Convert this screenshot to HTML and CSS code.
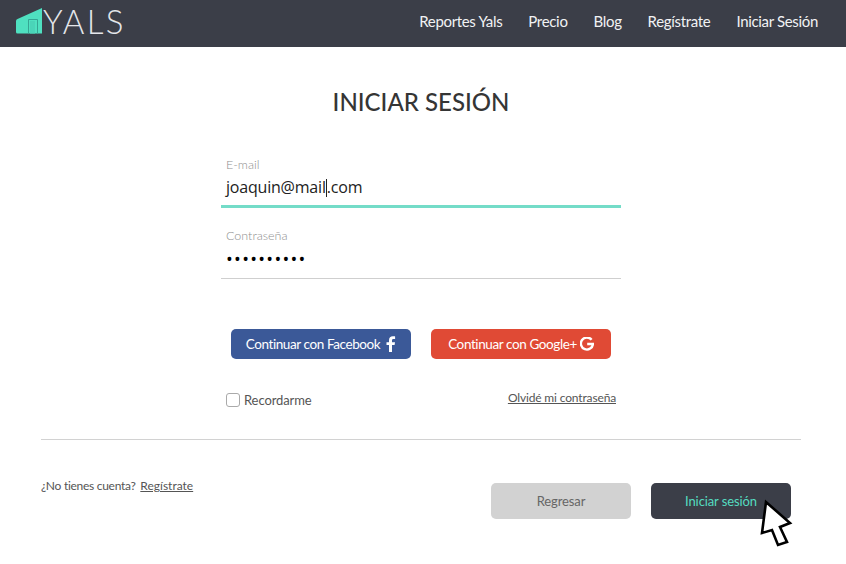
FILE: index.html
```html
<!DOCTYPE html>
<html lang="es">
<head>
  <meta charset="UTF-8" />
  <meta name="viewport" content="width=device-width, initial-scale=1" />
  <title>YALS - Iniciar sesión</title>
  <link rel="stylesheet" href="styles.css">
</head>
<body>
  <header class="topbar">
    <a class="brand" href="#">
      <svg class="brand-icon" width="26" height="26" viewBox="0 0 26 26">
        <path d="M0 13 Q0 11.5 1.5 11 L26 0 V25.5 H1.5 Q0 25.5 0 24 Z" fill="#4fe0c0"/>
        <path d="M12.5 11.5 H21.5 V25.5 M12.5 11.5 V25.5" fill="none" stroke="#35a593" stroke-width="1"/>
        <path d="M14 13 H19 V25.5 H14 Z" fill="#4ad4b8"/>
      </svg>
      <span class="brand-name">YALS</span>
    </a>
    <nav class="nav">
      <a href="#">Reportes Yals</a>
      <a href="#">Precio</a>
      <a href="#">Blog</a>
      <a href="#">Regístrate</a>
      <a href="#">Iniciar Sesión</a>
    </nav>
  </header>

  <main class="page">
    <h1 class="title">INICIAR SESIÓN</h1>

    <form class="login-form">
      <div class="field field-active">
        <label class="field-label">E-mail</label>
        <div class="field-value">joaquin@mail<span class="caret"></span>.com</div>
      </div>
      <div class="field">
        <label class="field-label">Contraseña</label>
        <div class="field-value dots">••••••••••</div>
      </div>

      <div class="social">
        <a class="btn-social fb" href="#">Continuar con Facebook
          <svg width="10" height="16" viewBox="0 0 10 16"><path d="M3 16 V9 H0.5 V6.2 H3 V4.2 C3 1.6 4.5 0.3 6.8 0.3 C7.9 0.3 8.8 0.4 9.1 0.4 V3 H7.5 C6.3 3 6 3.6 6 4.5 V6.2 H9 L8.6 9 H6 V16 Z" fill="#fff"/></svg>
        </a>
        <a class="btn-social gp" href="#">Continuar con Google+
          <svg width="14" height="14" viewBox="0 0 14 14"><path d="M11.6 2.8 A6 6 0 1 0 12.9 7 H7.2" fill="none" stroke="#fff" stroke-width="2.4"/></svg>
        </a>
      </div>

      <div class="options">
        <label class="remember"><span class="check"></span>Recordarme</label>
        <a class="forgot" href="#">Olvidé mi contraseña</a>
      </div>
    </form>

    <hr class="divider">

    <footer class="actions">
      <p class="signup">¿No tienes cuenta? <a href="#">Regístrate</a></p>
      <div class="action-btns">
        <a class="btn btn-back" href="#">Regresar</a>
        <a class="btn btn-login" href="#">Iniciar sesión</a>
      </div>
    </footer>
  </main>

  <svg class="cursor" width="40" height="56" viewBox="0 0 40 56">
    <path d="M11 7 L7 38 L17 35 L23 50 L32 47 L25 32 L35 28 Z" fill="#fff" stroke="#000" stroke-width="2.6" stroke-linejoin="miter"/>
  </svg>
</body>
</html>
```

FILE: styles.css
```css
* {
  box-sizing: border-box;
}
body, html {
  margin: 0;
  padding: 0;
  height: 100%;
  overflow: hidden;
  background: #fff;
  font-family: Lato, 'Liberation Sans', sans-serif;
  color: #333;
}
a {
  color: inherit;
  text-decoration: none;
}

.topbar {
  display: flex;
  justify-content: space-between;
  align-items: center;
  height: 47px;
  padding: 0 28px 6px 16px;
  background: #3b3e48;
}
.brand {
  display: flex;
  align-items: center;
}
.brand-icon {
  margin-right: 2px;
}
.brand-name {
  margin-left: -1px;
  font-size: 33px;
  font-weight: 300;
  letter-spacing: 2.3px;
  color: #e4e6ea;
}
.nav {
  display: flex;
  gap: 26px;
  font-size: 15px;
  letter-spacing: -0.33px;
  color: #f1f2f4;
}

.page {
  padding: 0 45px 0 41px;
}
.title {
  margin: 40px 0 0;
  text-align: center;
  font-size: 24px;
  line-height: 30px;
  font-weight: 500;
  color: #353535;
}

.login-form {
  width: 400px;
  margin: 40px 0 0 180px;
}
.field {
  height: 51px;
  padding: 0 5px;
  border-bottom: 1px solid #cfcfcf;
}
.field-active {
  margin-bottom: 20px;
  border-bottom: 3px solid #74dcc8;
}
.field-label {
  display: block;
  font-size: 12.5px;
  font-weight: 300;
  line-height: 15px;
  color: #8f8f8f;
}
.field-value {
  margin-top: 4px;
  font-family: 'Open Sans', sans-serif;
  font-size: 16px;
  letter-spacing: -0.2px;
  line-height: 22px;
  color: #222;
}
.field:not(.field-active) .field-value {
  margin-top: 5px;
}
.caret {
  display: inline-block;
  width: 1px;
  height: 18px;
  margin-bottom: -4px;
  background: #222;
}
.dots {
  font-size: 18px;
  letter-spacing: 1.3px;
  color: #000;
}

.social {
  display: flex;
  gap: 20px;
  margin: 50px 0 0 10px;
}
.btn-social {
  display: flex;
  align-items: center;
  justify-content: center;
  gap: 6px;
  width: 180px;
  height: 30px;
  border-radius: 5px;
  font-size: 13.5px;
  letter-spacing: -0.4px;
  color: #fff;
}
.fb {
  background: #3b5998;
}
.gp {
  gap: 3px;
  background: #e04a35;
}

.options {
  display: flex;
  justify-content: space-between;
  margin: 29px 5px 0;
  font-size: 13px;
  color: #555;
}
.remember {
  display: flex;
  align-items: center;
  gap: 4px;
  margin-top: 4px;
  letter-spacing: -0.1px;
}
.check {
  width: 14px;
  height: 14px;
  border: 1px solid #aaa;
  border-radius: 3px;
}
.forgot {
  font-size: 12px;
  text-decoration: underline;
  letter-spacing: -0.15px;
  margin-top: 2px;
}

.divider {
  margin: 31px 0 0;
  border: 0;
  border-top: 1px solid #d2d2d2;
  width: 760px;
}

.actions {
  display: flex;
  justify-content: space-between;
  width: 750px;
}
.signup {
  margin: 38px 0 0;
  font-size: 12px;
  letter-spacing: -0.28px;
  color: #555;
}
.signup a {
  margin-left: 2px;
  letter-spacing: 0;
  text-decoration: underline;
}
.action-btns {
  display: flex;
  gap: 20px;
  margin-top: 43px;
}
.btn {
  display: flex;
  align-items: center;
  justify-content: center;
  width: 140px;
  height: 36px;
  border-radius: 5px;
  font-size: 13px;
  letter-spacing: -0.1px;
}
.btn-back {
  background: #d2d2d2;
  color: #666;
}
.btn-login {
  background: #3b3e48;
  color: #55dcc0;
}

.cursor {
  position: absolute;
  left: 755px;
  top: 495px;
}
```
